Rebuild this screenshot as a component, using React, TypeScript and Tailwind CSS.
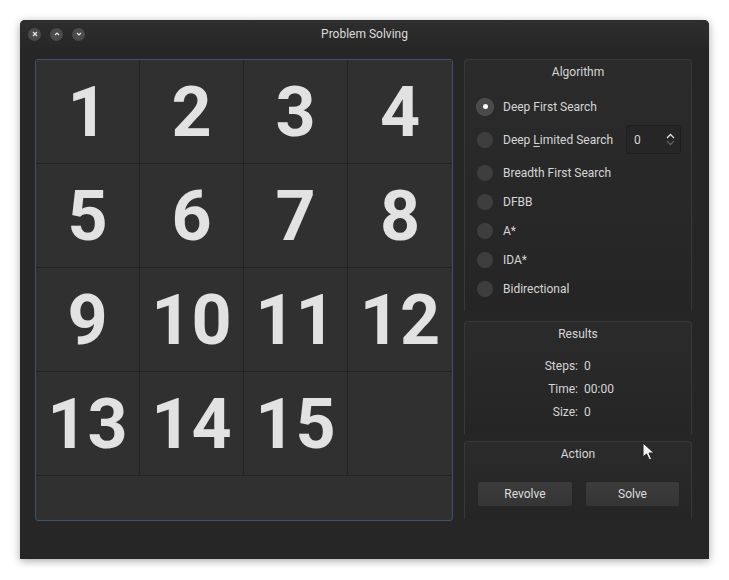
import React, { useState } from 'react';

const algorithms = [
  'Deep First Search',
  'Deep Limited Search',
  'Breadth First Search',
  'DFBB',
  'A*',
  'IDA*',
  'Bidirectional',
];

const tiles = [1, 2, 3, 4, 5, 6, 7, 8, 9, 10, 11, 12, 13, 14, 15, 0];

// Group box with the title centered in its top, the frame fades out downwards
const GroupBox: React.FC<{ title: string; className?: string; children: React.ReactNode }> = ({
  title,
  className,
  children,
}) => (
  <div
    className={`rounded-t-[4px] border-x border-t border-[#383838] bg-gradient-to-b from-[#2b2b2b] to-[#252525] ${className ?? ''}`}
  >
    <div className="pt-[4px] text-center text-[12px] leading-[16px] text-[#d6d6d6]">{title}</div>
    {children}
  </div>
);

const Radio: React.FC<{ checked: boolean }> = ({ checked }) => (
  <span
    className={`flex h-[16px] w-[16px] shrink-0 items-center justify-center rounded-full ${
      checked ? 'bg-[#4a4a4a] shadow-[0_0_0_1px_#555]' : 'bg-[#3e3e3e]'
    }`}
  >
    {checked && <span className="h-[5px] w-[5px] rounded-full bg-white" />}
  </span>
);

const App: React.FC = () => {
  const [algo, setAlgo] = useState<number>(0);
  const [depth] = useState<number>(0);

  return (
    <div className="h-[580px] w-[729px] bg-white pl-[20px] pt-[20px] font-['Roboto',sans-serif]">
      <div className="relative flex h-[539px] w-[689px] flex-col rounded-t-[5px] bg-[#262626] shadow-[0_2px_8px_rgba(0,0,0,0.35)]">
        {/* Title bar */}
        <div className="relative flex h-[28px] items-center rounded-t-[5px] bg-gradient-to-b from-[#2e2e2e] to-[#272727] px-[8px]">
          <div className="flex gap-[9px]">
            <span className="flex h-[13px] w-[13px] items-center justify-center rounded-full bg-[#4b4b4b]">
              <svg width="6" height="6" viewBox="0 0 6 6">
                <path d="M1 1 L5 5 M5 1 L1 5" stroke="#e8e8e8" strokeWidth="1.2" />
              </svg>
            </span>
            <span className="flex h-[13px] w-[13px] items-center justify-center rounded-full bg-[#4b4b4b]">
              <svg width="6" height="6" viewBox="0 0 6 6">
                <path d="M1 4 L3 2 L5 4" stroke="#e8e8e8" strokeWidth="1.2" fill="none" />
              </svg>
            </span>
            <span className="flex h-[13px] w-[13px] items-center justify-center rounded-full bg-[#4b4b4b]">
              <svg width="6" height="6" viewBox="0 0 6 6">
                <path d="M1 2 L3 4 L5 2" stroke="#e8e8e8" strokeWidth="1.2" fill="none" />
              </svg>
            </span>
          </div>
          <div className="absolute inset-x-0 top-[6px] text-center text-[12px] leading-[16px] text-[#dcdcdc]">
            Problem Solving
          </div>
        </div>

        {/* Body */}
        <div className="flex gap-[11px] pl-[15px] pt-[11px]">
          {/* Puzzle board */}
          <div className="h-[462px] w-[418px] rounded-[3px] border border-[#3f5072] bg-[#303030]">
            <div className="grid grid-cols-4">
              {tiles.map((n, i) => (
                <div
                  key={i}
                  className={`flex h-[104px] items-center justify-center border-b border-[#232323] ${
                    i % 4 !== 3 ? 'border-r' : ''
                  } font-['Roboto',sans-serif] text-[70px] font-bold leading-none text-[#e2e2e2]`}
                >
                  {n !== 0 ? n : ''}
                </div>
              ))}
            </div>
          </div>

          {/* Right column */}
          <div className="flex w-[228px] flex-col">
            <GroupBox title="Algorithm" className="h-[252px]">
              <div className="flex flex-col pl-[12px] pt-[12px]">
                {algorithms.map((name, i) => (
                  <label
                    key={name}
                    onClick={() => setAlgo(i)}
                    className={`flex cursor-default items-center gap-[10px] whitespace-nowrap text-[12px] text-[#d6d6d6] ${
                      i === 1 ? 'h-[37px]' : 'h-[29px]'
                    }`}
                  >
                    <Radio checked={algo === i} />
                    {i === 1 ? (
                      <>
                        <span className="w-[113px]">
                          Deep <span className="underline underline-offset-2">L</span>imited Search
                        </span>
                        <div className="flex h-[29px] w-[55px] items-center justify-between rounded-[3px] border border-[#1e1e1e] bg-[#262626] pl-[7px] pr-[5px]">
                          <span className="text-[12px] text-[#d6d6d6]">{depth}</span>
                          <div className="flex flex-col gap-[1px]">
                            <svg width="9" height="6" viewBox="0 0 9 6">
                              <path d="M1 5 L4.5 1.5 L8 5" stroke="#e0e0e0" strokeWidth="1.3" fill="none" />
                            </svg>
                            <svg width="9" height="6" viewBox="0 0 9 6">
                              <path d="M1 1 L4.5 4.5 L8 1" stroke="#5e5e5e" strokeWidth="1.3" fill="none" />
                            </svg>
                          </div>
                        </div>
                      </>
                    ) : (
                      <span>{name}</span>
                    )}
                  </label>
                ))}
              </div>
            </GroupBox>

            <GroupBox title="Results" className="mt-[10px] h-[113px]">
              <div className="grid grid-cols-[113px_1fr] gap-x-[6px] gap-y-[7px] pt-[16px] text-[12px] leading-[16px] text-[#d6d6d6]">
                <span className="text-right">Steps:</span>
                <span>0</span>
                <span className="text-right">Time:</span>
                <span>00:00</span>
                <span className="text-right">Size:</span>
                <span>0</span>
              </div>
            </GroupBox>

            <GroupBox title="Action" className="mt-[7px] h-[78px]">
              <div className="flex gap-[12px] pl-[12px] pt-[19px]">
                <button className="h-[26px] w-[96px] rounded-[3px] border border-[#262626] bg-gradient-to-b from-[#3c3c3c] to-[#353535] text-[12px] text-[#dedede]">
                  Revolve
                </button>
                <button className="h-[26px] w-[95px] rounded-[3px] border border-[#262626] bg-gradient-to-b from-[#3c3c3c] to-[#353535] text-[12px] text-[#dedede]">
                  Solve
                </button>
              </div>
            </GroupBox>
          </div>
        </div>

        {/* Mouse pointer over the window */}
        <svg className="absolute left-[622px] top-[422px]" width="14" height="20" viewBox="0 0 14 20">
          <path d="M1 1 L1 15 L4.5 12 L7.5 18 L9.5 17 L7 11 L12 11 Z" fill="#f2f2f2" stroke="#222" strokeWidth="1" />
        </svg>
      </div>
    </div>
  );
};

export default App;
